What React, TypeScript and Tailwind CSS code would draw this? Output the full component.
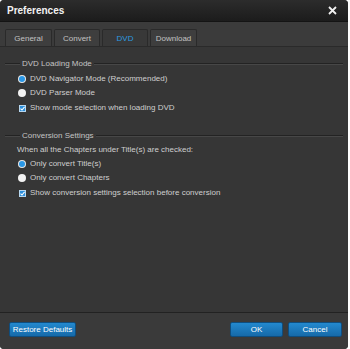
import React from "react";

const font = { fontFamily: '"Liberation Sans", Arial, sans-serif' };

function GroupHeader({ title }: { title: string }) {
  return (
    <div className="flex items-center h-[14px] pl-[5px] pr-[5px]">
      <div className="w-[15px] h-[2px] border-t border-t-[#232323] border-b border-b-[#474747]" />
      <span className="px-[2px] text-[8px] text-[#c4c4c4] leading-none">{title}</span>
      <div className="flex-1 h-[2px] border-t border-t-[#232323] border-b border-b-[#474747]" />
    </div>
  );
}

function Radio({ label, checked }: { label: string; checked?: boolean }) {
  return (
    <div className="flex items-center h-[14px] pl-[18px] gap-[4px]">
      {checked ? (
        <span className="w-[8px] h-[8px] rounded-full bg-[#e8e8e8] flex items-center justify-center">
          <span className="w-[6px] h-[6px] rounded-full bg-[#2a97e6]" />
        </span>
      ) : (
        <span className="w-[8px] h-[8px] rounded-full bg-[#f2f2f2]" />
      )}
      <span className="text-[8px] leading-none text-[#cfcfcf]">{label}</span>
    </div>
  );
}

function Check({ label }: { label: string }) {
  return (
    <div className="flex items-center h-[14px] pl-[19px] gap-[4px]">
      <span className="w-[7px] h-[7px] bg-[#2d8fdb] border border-[#b8d8f0] flex items-center justify-center">
        <svg width="5" height="5" viewBox="0 0 5 5">
          <path d="M0.5 2.6 L2 4 L4.6 0.8" stroke="#fff" strokeWidth="1.1" fill="none" />
        </svg>
      </span>
      <span className="text-[8px] leading-none text-[#cfcfcf]">{label}</span>
    </div>
  );
}

function Tab({ label, active, w }: { label: string; active?: boolean; w: string }) {
  return (
    <div
      className={`${w} h-[17px] pt-[1px] rounded-t-[2px] border border-b-0 border-[#2a2a2a] flex items-center justify-center text-[8px] leading-none ${
        active ? "bg-[#383838] text-[#2b9be0]" : "bg-[#3e3e3e] text-[#c2c2c2]"
      }`}
    >
      {label}
    </div>
  );
}

function Btn({ label, w }: { label: string; w: string }) {
  return (
    <button
      className={`${w} h-[15px] rounded-[2px] border border-[#0f4d7e] bg-gradient-to-b from-[#2389cf] to-[#166aa9] text-white text-[8px] leading-none flex items-center justify-center`}
    >
      {label}
    </button>
  );
}

export default function App() {
  return (
    <div className="w-[350px] h-[349px] bg-white" style={font}>
      <div className="w-[348px] h-[349px] rounded-[4px] overflow-hidden flex flex-col bg-[#363636]">
        {/* Title bar */}
        <div className="h-[22px] shrink-0 bg-gradient-to-b from-[#2c2c2c] to-[#1c1c1c] border-b border-[#141414] flex items-center justify-between pl-[7px] pr-[11px]">
          <span className="text-[10px] font-bold text-[#f2f2f2] leading-none">Preferences</span>
          <svg width="9" height="9" viewBox="0 0 9 9">
            <path d="M1 1 L8 8 M8 1 L1 8" stroke="#f0f0f0" strokeWidth="1.8" />
          </svg>
        </div>

        {/* Tabs */}
        <div className="h-[25px] shrink-0 bg-[#3b3b3b] flex items-end gap-[2px] px-[5px] border-b border-[#2a2a2a]">
          <Tab label="General" w="w-[47px]" />
          <Tab label="Convert" w="w-[46px]" />
          <Tab label="DVD" w="w-[46px]" active />
          <Tab label="Download" w="w-[47px]" />
        </div>

        {/* Content */}
        <div className="flex-1 bg-[#363636] pt-[10px]">
          <GroupHeader title="DVD Loading Mode" />
          <div className="mt-[1px]">
            <Radio label="DVD Navigator Mode (Recommended)" checked />
          </div>
          <Radio label="DVD Parser Mode" />
          <div className="mt-[1px]">
            <Check label="Show mode selection when loading DVD" />
          </div>

          <div className="mt-[14px]">
            <GroupHeader title="Conversion Settings" />
          </div>
          <div className="h-[14px] flex items-center pl-[17px] text-[8px] leading-none text-[#cfcfcf]">
            When all the Chapters under Title(s) are checked:
          </div>
          <Radio label="Only convert Title(s)" checked />
          <Radio label="Only convert Chapters" />
          <div className="mt-[1px]">
            <Check label="Show conversion settings selection before conversion" />
          </div>
        </div>

        {/* Bottom bar */}
        <div className="h-[37px] shrink-0 border-t border-[#222] bg-[#3a3a3a] flex items-start pt-[9px] pl-[9px] pr-[6px]">
          <Btn label="Restore Defaults" w="w-[67px]" />
          <div className="flex-1" />
          <div className="flex gap-[5px]">
            <Btn label="OK" w="w-[53px]" />
            <Btn label="Cancel" w="w-[54px]" />
          </div>
        </div>
      </div>
    </div>
  );
}
